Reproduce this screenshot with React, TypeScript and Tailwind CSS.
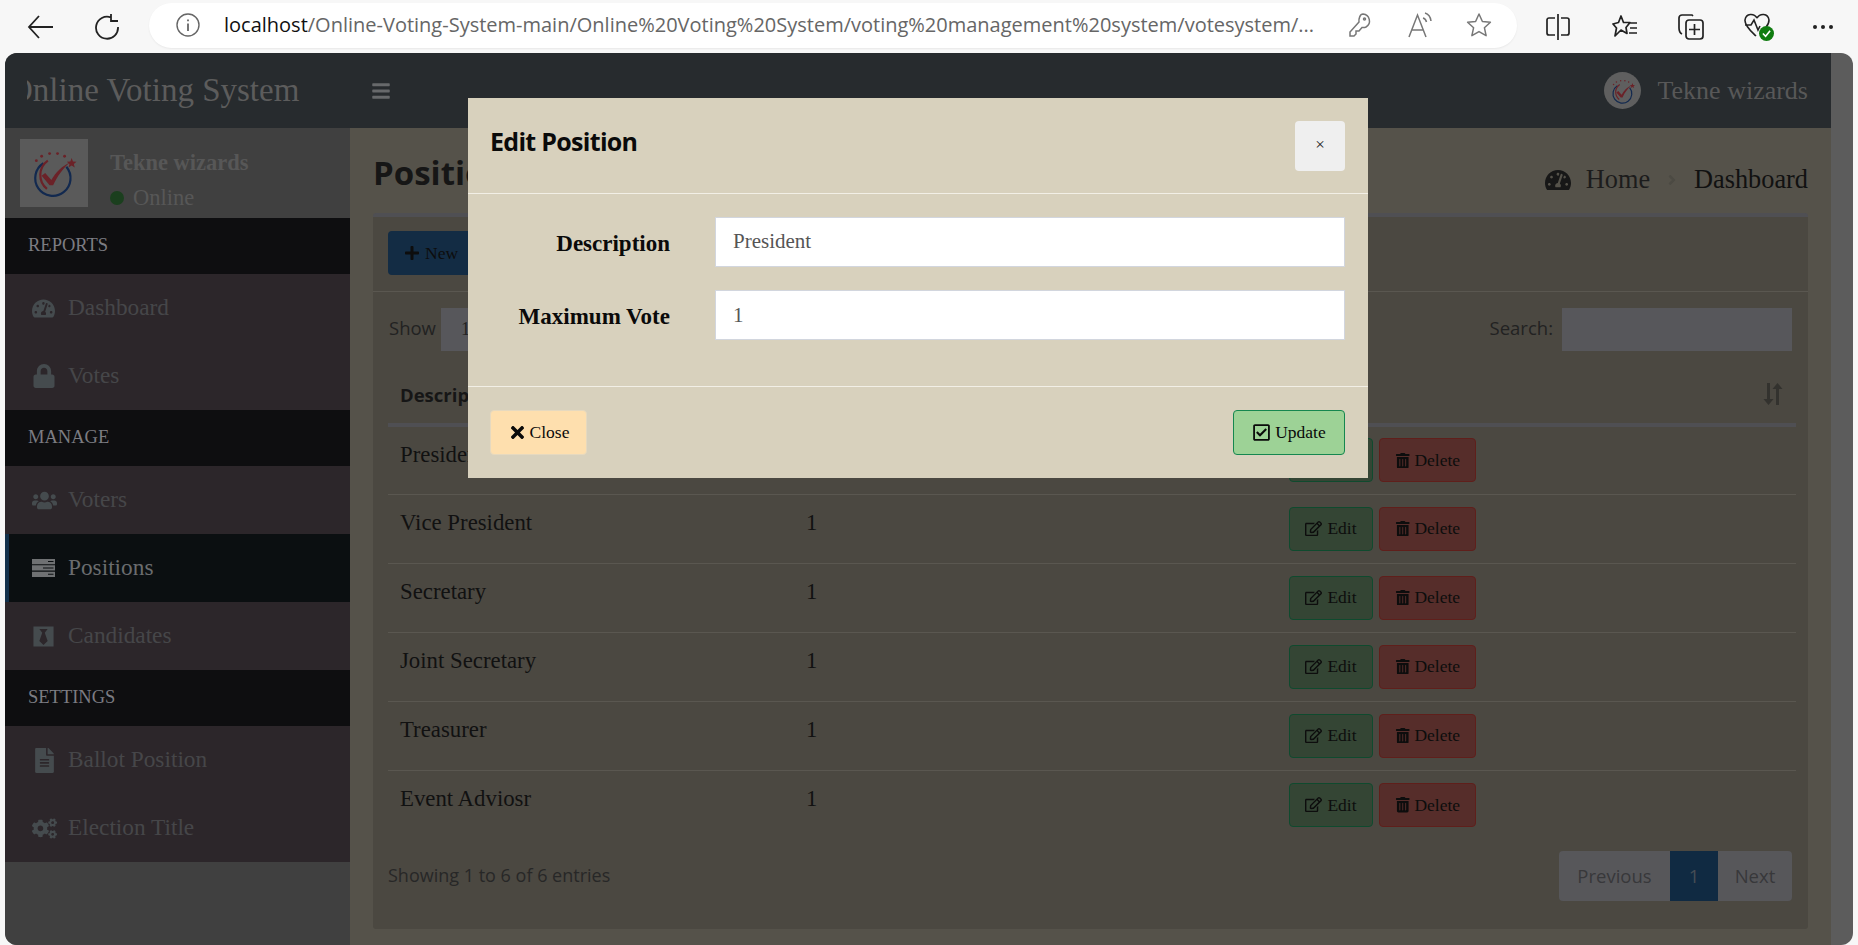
import React from "react";
import { FaPlus, FaTachometerAlt, FaLock, FaUsers, FaBlackTie, FaFileAlt, FaCogs, FaBars, FaRegEdit, FaTrashAlt, FaTimes, FaRegCheckSquare, FaAngleRight } from "react-icons/fa";

const Logo = ({ size = 60 }: { size?: number }) => (
  <svg width={size} height={size} viewBox="0 0 68 68" fill="none">
    <g fill="#6b2228">
      <circle cx="14" cy="20" r="1.6" /><circle cx="20" cy="15" r="1.6" /><circle cx="29" cy="12" r="1.6" /><circle cx="38" cy="12" r="1.6" /><circle cx="46" cy="15" r="1.6" />
      <path d="M54 17l1.5 4 4 .2-3 2.6 1 4-3.500-2.200-3.500 2.200 1-4-3-2.600 4-.2z" />
    </g>
    <path d="M48 27A20 20 0 1 1 22 23" stroke="#12294f" strokeWidth="2.500" />
    <path d="M26 52A20 20 0 0 1 27 20" stroke="#6b2228" strokeWidth="2.500" />
    <path d="M20 37l4-3 7 8c5-9 12-16 21-20-8 7-14 15-19 26h-4z" fill="#6b2228" />
  </svg>
);

const Positions = () => (
  <svg width="23" height="18" viewBox="0 0 23 18" fill="currentColor">
    <path fillRule="evenodd" d="M0 0h23v5.300H0zM16 2v1h5.500V2zM0 6.300h23v5.300H0zM11 8.500v1h10.500v-1zM0 12.700h23V18H0zM16 14.800v1h5.500v-1z" />
  </svg>
);

const Chrome = () => (
  <div className="flex h-[53px] items-center bg-[#f7f7f7] text-[#222]">
    <div className="flex w-[149px] shrink-0 items-center">
      <svg className="ml-[27px]" width="28" height="26" viewBox="0 0 28 26" fill="none" stroke="#222" strokeWidth="1.800"><path d="M26 13H2M12 2L2 13l10 11" /></svg>
      <svg className="ml-[39px]" width="27" height="26" viewBox="0 0 27 26" fill="none" stroke="#222" strokeWidth="1.800"><path d="M17 3.500A11 11 0 1 0 24 13M17 0v7h7" /></svg>
    </div>
    <div className="mt-[-3px] flex h-[45px] w-[1368px] shrink-0 items-center rounded-full bg-white pl-[27px] shadow-[0_1px_2px_rgba(0,0,0,0.06)]">
      <svg width="24" height="24" viewBox="0 0 24 24" fill="none" stroke="#666" strokeWidth="1.400"><circle cx="12" cy="12" r="11" /><path d="M12 10.500V18M12 6.500v1.800" strokeWidth="1.800" /></svg>
      <div className="ml-[24px] w-[1094px] truncate font-['Open_Sans',sans-serif] text-[20px] text-[#666]"><span className="text-[#111]">localhost</span>/Online-Voting-System-main/Online%20Voting%20System/voting%20management%20system/votesystem/...</div>
      <svg className="ml-[30px]" width="24" height="26" viewBox="0 0 24 26" fill="none" stroke="#777" strokeWidth="1.500"><path d="M15 2a7 7 0 0 1 3 13c-2 1-3 .5-4 .5L11 19H8v3l-2 2H2v-4l9-10c-.5-3 1-8 4-8z" /><circle cx="16.500" cy="7" r="1" /></svg>
      <svg className="ml-[35px]" width="28" height="28" viewBox="0 0 28 28" fill="none" stroke="#777" strokeWidth="1.500"><path d="M2 26L10.500 4 19 26M5 19h11M16 7c2 .5 3 2 3.500 4M18 2c3.500 1 5.500 4 6 8" /></svg>
      <svg className="ml-[31px]" width="26" height="26" viewBox="0 0 26 26" fill="none" stroke="#777" strokeWidth="1.500"><path d="M13 2l3.400 7.500 8 .8-6 5.400 1.700 8L13 19.600 5.900 23.700l1.700-8-6-5.400 8-.8z" strokeLinejoin="round" /></svg>
    </div>
    <svg className="ml-[29px]" width="24" height="26" viewBox="0 0 24 26" fill="none" stroke="#222" strokeWidth="1.700"><path d="M9 4H3a2 2 0 0 0-2 2v13a2 2 0 0 0 2 2h6M15 4h6a2 2 0 0 1 2 2v13a2 2 0 0 1-2 2h-6M12 0v26" /></svg>
    <svg className="ml-[42px]" width="26" height="26" viewBox="0 0 26 26" fill="none" stroke="#222" strokeWidth="1.700"><path d="M9 2l2.500 6.500H18l-4 5 1 6-6-3.500-6 6 1.500-8L1 10l5.500-1.500zM17 9h8M18 14h7M17 19h8" strokeLinejoin="round" /></svg>
    <svg className="ml-[40px]" width="26" height="27" viewBox="0 0 26 27" fill="none" stroke="#222" strokeWidth="1.700"><path d="M15 3l-1-1H4a3 3 0 0 0-3 3v10c0 3 1 5 3 6" /><rect x="8" y="7" width="17" height="19" rx="3" /><path d="M16.500 11v11M11 16.500h11" /></svg>
    <div className="relative ml-[40px] h-[28px] w-[30px]">
      <svg width="26" height="24" viewBox="0 0 26 24" fill="none" stroke="#222" strokeWidth="1.600"><path d="M13 5C10 0 2 0 1 7c-.5 6 7 12 11 16M13 5c3-5 11-5 12 2 0 3-1 5-3 7M1 12h6l3-5 4 10 2-4" /></svg>
      <div className="absolute bottom-0 right-0 flex size-[15px] items-center justify-center rounded-full bg-[#107c10]">
        <svg width="9" height="9" viewBox="0 0 10 10" fill="none" stroke="white" strokeWidth="1.800"><path d="M1 5l3 3 5-6" /></svg>
      </div>
    </div>
    <div className="ml-[39px] flex gap-[4px]"><span className="size-[4px] rounded-full bg-[#222]" /><span className="size-[4px] rounded-full bg-[#222]" /><span className="size-[4px] rounded-full bg-[#222]" /></div>
  </div>
);

const MenuHead = ({ children }: { children: React.ReactNode }) => (
  <div className="flex h-[56px] items-center bg-[#0e0e10] pl-[23px] text-[18.500px] text-[#7c7c82]">{children}</div>
);

const MenuItem = ({ icon, label, active }: { icon: React.ReactNode; label: string; active?: boolean }) => (
  <div className={active ? "flex h-[68px] items-center border-l-[4px] border-[#12304a] bg-[#0b0f11] pl-[23px] text-[#6a6c6e]" : "flex h-[68px] items-center pl-[27px] text-[#464649]"}>
    <span className={active ? "flex w-[36px] items-center text-[#6f7173]" : "flex w-[36px] items-center text-[#454b4e]"}>{icon}</span>
    <span className="pb-[2px] text-[23.300px]">{label}</span>
  </div>
);

const Sidebar = () => (
  <aside className="flex w-[345px] shrink-0 flex-col bg-[#404040]">
    <div className="flex h-[90px] items-center pl-[15px]">
      <div className="flex h-[68px] w-[68px] items-center justify-center bg-[#5a5a5a]"><Logo /></div>
      <div className="ml-[22px] mt-[15px] flex flex-col">
        <span className="text-[22.500px] font-bold leading-[34px] text-[#575757]">Tekne wizards</span>
        <span className="flex items-center text-[22.500px] leading-[36px] text-[#575757]"><span className="mr-[9px] size-[14px] rounded-full bg-[#1b3f1e]" />Online</span>
      </div>
    </div>
    <MenuHead>REPORTS</MenuHead>
    <div className="bg-[#2c262a]">
      <MenuItem icon={<FaTachometerAlt size={23} />} label="Dashboard" />
      <MenuItem icon={<FaLock size={24} />} label="Votes" />
    </div>
    <MenuHead>MANAGE</MenuHead>
    <div className="bg-[#2c262a]">
      <MenuItem icon={<FaUsers size={25} />} label="Voters" />
      <MenuItem active icon={<Positions />} label="Positions" />
      <MenuItem icon={<FaBlackTie size={23} />} label="Candidates" />
    </div>
    <MenuHead>SETTINGS</MenuHead>
    <div className="bg-[#2c262a]">
      <MenuItem icon={<FaFileAlt size={25} />} label="Ballot Position" />
      <MenuItem icon={<FaCogs size={25} />} label="Election Title" />
    </div>
  </aside>
);

const rows = ["President", "Vice President", "Secretary", "Joint Secretary", "Treasurer", "Event Adviosr"];

const Row = ({ name, last }: { name: string; last: boolean }) => (
  <tr className={last ? "h-[69px]" : "h-[69px] border-b border-[#5a5750]"}>
    <td className="pl-[12px] pb-[11px] text-[22.800px] text-[#111]">{name}</td>
    <td className="pl-[12px] pb-[11px] text-[22.800px] text-[#111]">1</td>
    <td className="pl-[12px]">
      <div className="flex gap-[6px]">
        <button className="flex h-[44px] w-[84px] items-center justify-center gap-[5px] rounded-[4px] border border-[#0f4a2e] bg-[#344534] text-[17.500px] text-[#0d0d0d]"><FaRegEdit size={17} />Edit</button>
        <button className="flex h-[44px] w-[97px] items-center justify-center gap-[4px] rounded-[4px] border border-[#5f1f1b] bg-[#562d2a] text-[17.500px] text-[#0d0d0d]"><FaTrashAlt size={15.500} />Delete</button>
      </div>
    </td>
  </tr>
);

const Content = () => (
  <main className="flex min-w-0 flex-1 flex-col bg-[#55524a] px-[23px] text-[#111]">
    <div className="flex h-[85px] items-center justify-between pt-[4px]">
      <h1 className="font-['Open_Sans',sans-serif] text-[33px] font-bold text-[#161616]">Positions</h1>
      <div className="mt-[14px] flex items-center text-[26.300px]">
        <FaTachometerAlt size={26} className="mr-[15px] text-[#171717]" />
        <span className="text-[#1c1c1c]">Home</span>
        <FaAngleRight size={16} className="mx-[14px] text-[#4c4a43]" />
        <span>Dashboard</span>
      </div>
    </div>
    <section className="h-[716px] rounded-[3px] border-t-[4px] border-[#4f4f53] bg-[#4b4841]">
      <div className="flex h-[75px] items-center border-b border-[#5a5750] px-[15px]">
        <button className="mb-[2px] flex h-[44px] w-[100px] items-center gap-[5px] rounded-[4px] bg-[#132c44] pl-[16px] text-[17.500px] text-[#0d0d0d]"><FaPlus size={16} />New</button>
      </div>
      <div className="flex h-[75px] items-center justify-between pl-[16px] pr-[16px] font-['Open_Sans',sans-serif] text-[18.500px] text-[#222]">
        <div className="flex items-center gap-[5px]"><span className="mb-[4px]">Show</span> <span className="flex h-[43px] w-[90px] items-center bg-[#57575b] pl-[20px] font-['Liberation_Serif',serif]">10</span></div>
        <div className="flex items-center gap-[9px]"><span className="mb-[4px]">Search:</span> <span className="h-[43px] w-[230px] bg-[#57575b]" /></div>
      </div>
      <div className="pl-[15px] pr-[12px]">
        <table className="w-full table-fixed border-collapse">
          <colgroup><col className="w-[406px]" /><col className="w-[483px]" /><col /></colgroup>
          <thead>
            <tr className="h-[58px] border-b-[4px] border-[#4f4f53] text-left font-['Open_Sans',sans-serif] text-[18.500px] font-bold text-[#161616]">
              <th className="pl-[12px]">Description</th>
              <th className="pl-[12px]">Maximum Vote</th>
              <th className="relative pl-[12px]">Tools
                <svg className="absolute right-[13px] top-[16px]" width="20" height="22" viewBox="0 0 20 22" fill="#33322e"><path d="M4 0h3v16h3.500L5.500 22 0.500 16H4zM13 22h3V6h3.500L14.500 0 9.500 6H13z" /></svg>
              </th>
            </tr>
          </thead>
          <tbody>{rows.map((r, i) => <Row key={r} name={r} last={i === rows.length - 1} />)}</tbody>
        </table>
        <div className="mt-[12px] flex items-center justify-between font-['Open_Sans',sans-serif] text-[18.500px] text-[#272727]">
          <span className="mb-[2px] text-[18px]">Showing 1 to 6 of 6 entries</span>
          <div className="mr-[4px] flex h-[50px] items-center overflow-hidden rounded-[4px] bg-[#57575a] text-[#38383a]">
            <span className="flex h-full w-[111px] items-center justify-center">Previous</span>
            <span className="flex h-full w-[48px] items-center justify-center bg-[#102a42] text-[#454d55]">1</span>
            <span className="flex h-full w-[74px] items-center justify-center">Next</span>
          </div>
        </div>
      </div>
    </section>
  </main>
);

const Modal = () => (
  <div className="absolute left-[468px] top-[98px] h-[380px] w-[900px] bg-[#d8d1bd] text-[#0a0a0a]">
    <div className="flex h-[96px] items-start justify-between border-b border-[#f2efe6] pl-[22px] pr-[23px]">
      <h4 className="mt-[21px] font-['Open_Sans',sans-serif] text-[25px] font-bold leading-[44px] tracking-[-0.7px]">Edit Position</h4>
      <button className="mt-[23px] h-[50px] w-[50px] rounded-[4px] bg-[#efefef] pb-[2px] text-[17px] text-[#222]">×</button>
    </div>
    <div className="flex h-[193px] flex-col gap-[23px] border-b border-[#f2efe6] pr-[23px] pt-[23px]">
      <div className="flex items-center">
        <label className="w-[202px] pt-[4px] text-right text-[23px] font-bold">Description</label>
        <div className="ml-[45px] flex h-[50px] flex-1 items-center border border-[#d2d6de] bg-white pl-[17px] text-[21px] text-[#555]">President</div>
      </div>
      <div className="flex items-center">
        <label className="w-[202px] pt-[4px] text-right text-[23px] font-bold">Maximum Vote</label>
        <div className="ml-[45px] flex h-[50px] flex-1 items-center border border-[#d2d6de] bg-white pt-[2px] pl-[17px] text-[21px] text-[#555]">1</div>
      </div>
    </div>
    <div className="flex items-start justify-between pl-[22px] pr-[23px] pt-[23px]">
      <button className="flex h-[45px] w-[97px] items-center justify-center gap-[3px] rounded-[4px] border border-[#e6d9bf] bg-[#fedfae] text-[17.500px]"><FaTimes size={19} />Close</button>
      <button className="flex h-[45px] w-[112px] items-center justify-center gap-[4px] rounded-[4px] border border-[#15874f] bg-[#9dd296] text-[17.500px]"><FaRegCheckSquare size={19} />Update</button>
    </div>
  </div>
);

export default function App() {
  return (
    <div className="relative h-[945px] w-[1858px] overflow-hidden bg-[#f7f7f7] font-['Liberation_Serif',serif]">
      <Chrome />
      <div className="ml-[5px] mr-[5px] flex h-[892px] overflow-hidden rounded-[12px] bg-[#5c5c5c]">
        <div className="flex w-[1826px] shrink-0 flex-col">
          <header className="flex h-[75px] shrink-0 items-center bg-[#272b2e]">
            <div className="w-[345px] shrink-0 pl-[22px]">
              <div className="overflow-hidden whitespace-nowrap text-[33px] text-[#5c5c5c]"><span className="-ml-[18px] inline-block">Online Voting System</span></div>
            </div>
            <FaBars size={20} className="ml-[21px] text-[#67696b]" />
            <div className="ml-auto flex items-center pr-[23px] text-[26px] text-[#585858]">
              <span className="mr-[16px] flex size-[37px] items-center justify-center overflow-hidden rounded-full bg-[#5f5f5f]"><Logo size={32} /></span>
              Tekne wizards
            </div>
          </header>
          <div className="flex min-h-0 flex-1"><Sidebar /><Content /></div>
        </div>
      </div>
      <Modal />
    </div>
  );
}
